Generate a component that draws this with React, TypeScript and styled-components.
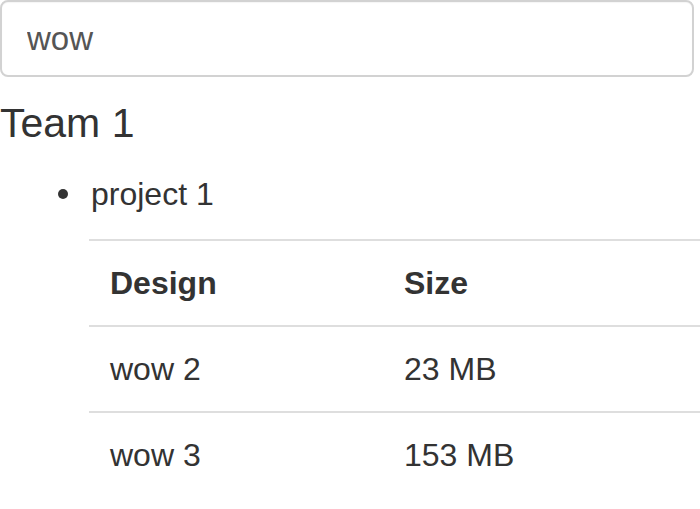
import React from "react";
import styled, { createGlobalStyle } from "styled-components";

const GlobalStyle = createGlobalStyle`
  html, body {
    margin: 0;
    padding: 0;
    background: #ffffff;
  }
  body {
    font-family: "Liberation Sans", Helvetica, Arial, sans-serif;
    color: #333333;
    overflow: hidden;
  }
  * { box-sizing: border-box; }
`;

const Page = styled.div`
  width: 700px;
  display: flex;
  flex-direction: column;
`;

const SearchInput = styled.input`
  width: 694px;
  height: 77px;
  margin: 0;
  padding: 0 25px;
  border: 2px solid #d2d2d2;
  border-radius: 8px;
  box-shadow: inset 0 1px 1px rgba(0, 0, 0, 0.04);
  font-family: "Liberation Sans", Helvetica, Arial, sans-serif;
  font-size: 33px;
  color: #555555;
  background: #ffffff;
  outline: none;
`;

const TeamHeading = styled.h4`
  margin: 24px 0 0 0;
  font-size: 41px;
  line-height: 44px;
  font-weight: 400;
  color: #333333;
`;

const ProjectList = styled.ul`
  list-style: none;
  margin: 26px 0 0 0;
  padding: 0 0 0 58px;
`;

const ProjectItem = styled.li`
  display: flex;
  flex-direction: column;
`;

const ProjectName = styled.div`
  display: flex;
  align-items: center;
  gap: 23px;
  font-size: 32px;
  line-height: 46px;
  &::before {
    content: "";
    width: 10px;
    height: 10px;
    border-radius: 50%;
    background: #333333;
    flex: none;
  }
`;

const DesignTable = styled.table`
  margin: 22px 0 0 31px;
  width: 611px;
  border-collapse: collapse;
  font-size: 32px;
  line-height: 46px;
`;

const Cell = styled.td<{ $head?: boolean; $first?: boolean }>`
  padding: 19px 21px;
  border-top: 2px solid #dedede;
  text-align: left;
  font-weight: ${(p) => (p.$head ? 700 : 400)};
  width: ${(p) => (p.$first ? "294px" : "auto")};
  color: #333333;
  white-space: nowrap;
`;

const rows = [
  { name: "wow 2", size: "23 MB" },
  { name: "wow 3", size: "153 MB" },
];

export default function App() {
  return (
    <>
      <GlobalStyle />
      <Page>
        <SearchInput defaultValue="wow" />
        <TeamHeading>Team 1</TeamHeading>
        <ProjectList>
          <ProjectItem>
            <ProjectName>project 1</ProjectName>
            <DesignTable>
              <thead>
                <tr>
                  <Cell as="th" $head $first>
                    Design
                  </Cell>
                  <Cell as="th" $head>
                    Size
                  </Cell>
                </tr>
              </thead>
              <tbody>
                {rows.map((r) => (
                  <tr key={r.name}>
                    <Cell $first>{r.name}</Cell>
                    <Cell>{r.size}</Cell>
                  </tr>
                ))}
              </tbody>
            </DesignTable>
          </ProjectItem>
        </ProjectList>
      </Page>
    </>
  );
}
